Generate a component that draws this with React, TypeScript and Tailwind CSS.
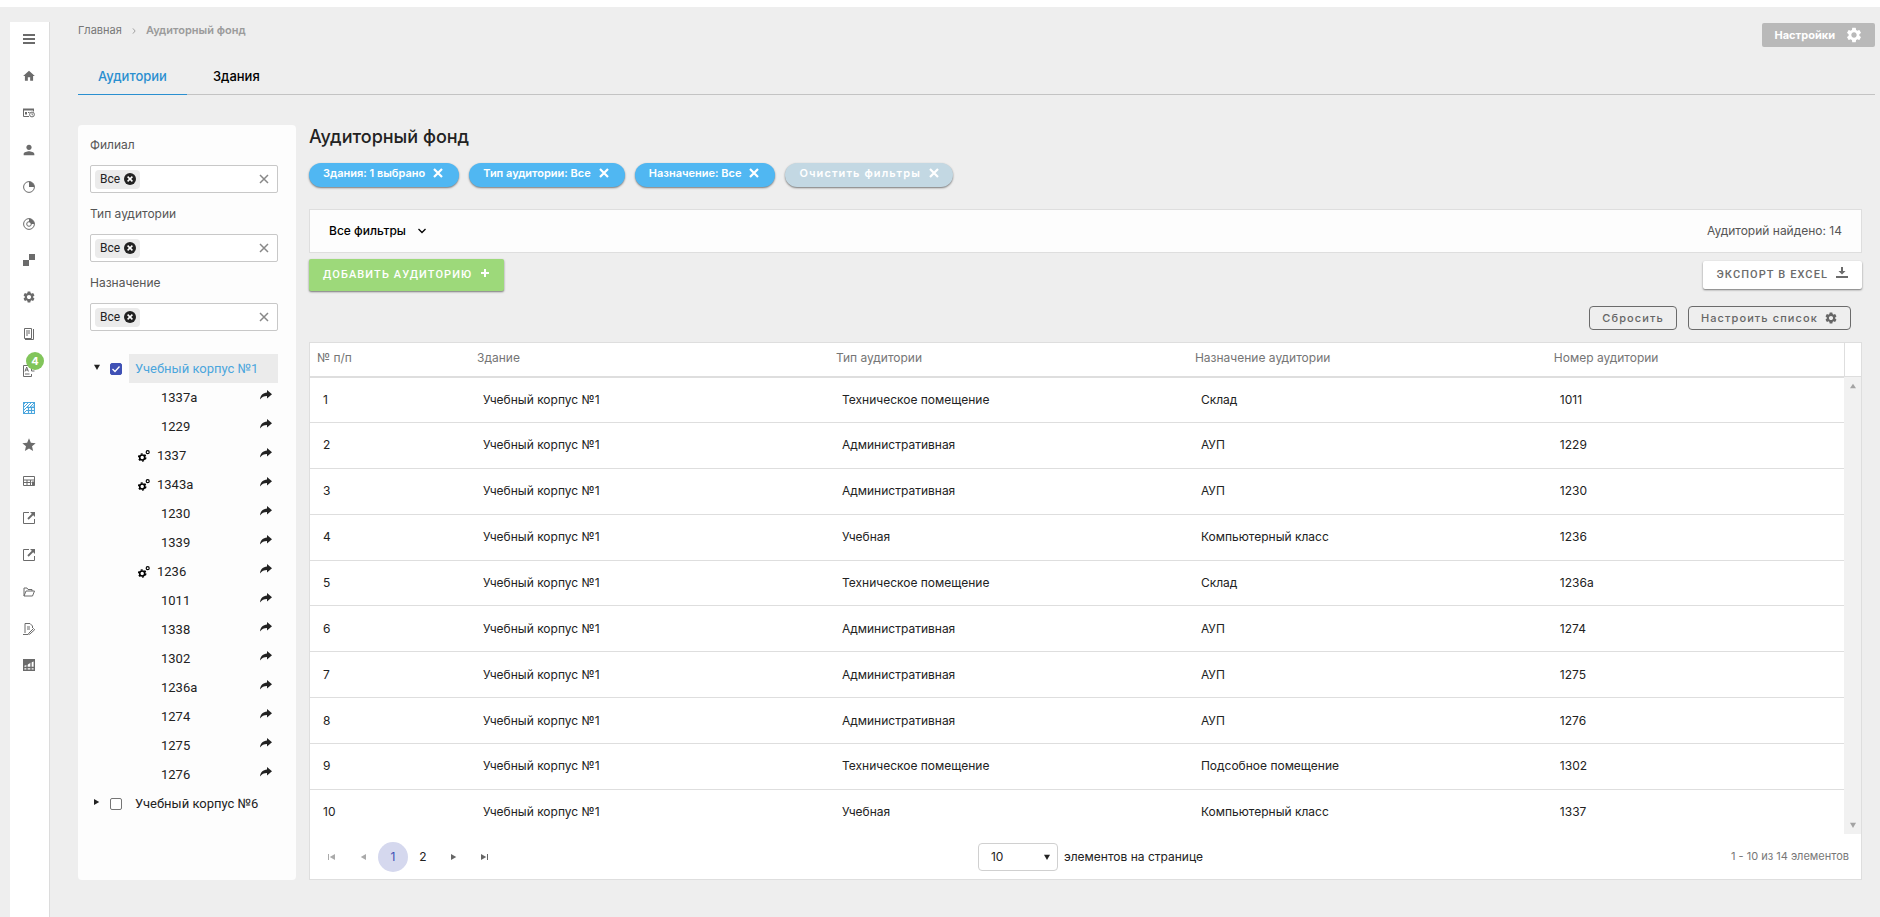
import { useState, type ReactNode } from 'react'
import { MdHome, MdPerson, MdSettings, MdStar } from 'react-icons/md'

interface NavItem {
  label: string
  icon: ReactNode
  active?: boolean
  badge?: number
}

function Glyph({ children }: { children: ReactNode }) {
  return (
    <svg viewBox="0 0 12 12" className="size-3" fill="none" stroke="currentColor" aria-hidden>
      {children}
    </svg>
  )
}

const externalIcon = (
  <Glyph>
    <path d="M6 .5H.5v11h11V7" />
    <path d="M5 7l5-5" strokeWidth="1.800" />
    <path d="M7 0h5v5z" fill="currentColor" stroke="none" />
  </Glyph>
)

const NAV: NavItem[] = [
  {
    label: 'Меню',
    icon: (
      <Glyph>
        <path d="M0 2h12M0 6h12M0 10h12" strokeWidth="2" />
      </Glyph>
    ),
  },
  { label: 'Главная', icon: <MdHome className="size-3.5" /> },
  {
    label: 'Расписание',
    icon: (
      <Glyph>
        <path d="M.5 2v7.500H6M10.500 2v2.500" />
        <path d="M0 2.500h11" strokeWidth="2" />
        <path d="M2 5h2v2.500H2zM5 5h1.500v1H5z" fill="currentColor" stroke="none" />
        <circle cx="9" cy="7.500" r="2.400" />
        <path d="M9 6v1.800h1.200" strokeWidth=".8" />
      </Glyph>
    ),
  },
  { label: 'Профиль', icon: <MdPerson className="size-4" /> },
  {
    label: 'Отчёты',
    icon: (
      <Glyph>
        <circle cx="6" cy="6" r="5.400" />
        <path d="M6 .6V6h5.400A5.400 5.400 0 0 0 6 .6z" fill="currentColor" stroke="none" />
      </Glyph>
    ),
  },
  {
    label: 'Аналитика',
    icon: (
      <Glyph>
        <circle cx="6" cy="6" r="5.400" />
        <path d="M6 .6V4a2 2 0 0 1 2 2h3.400A5.400 5.400 0 0 0 6 .6z" fill="currentColor" stroke="none" />
        <circle cx="6" cy="6" r="2.300" />
      </Glyph>
    ),
  },
  {
    label: 'Модули',
    icon: (
      <Glyph>
        <path d="M6 0h6v6H6zM0 6h6v6H0z" fill="currentColor" stroke="none" />
      </Glyph>
    ),
  },
  { label: 'Настройки', icon: <MdSettings className="size-3.5" /> },
  {
    label: 'Журнал',
    icon: (
      <Glyph>
        <path d="M1.500 .5h7v10h-7z" />
        <path d="M3 3h4M3 5h4M3 7h2" />
        <path d="M10.500 1v10.500H2" />
      </Glyph>
    ),
  },
  {
    label: 'Аттестация',
    badge: 4,
    icon: (
      <Glyph>
        <path d="M8 .5H.5v11h8V9" />
        <path d="M2 6.500L3.700 2l1.700 4.500M2.500 5h2.500M2 9h4.500" />
        <path d="M8.500 2.500v3.500h3" />
      </Glyph>
    ),
  },
  {
    label: 'Аудиторный фонд',
    active: true,
    icon: (
      <Glyph>
        <path d="M.5 .5h11v11H.5zM5.500 4.500V11M8.500 4.500V11M4 5.500h7M4 8.500h7" strokeWidth="1.200" />
        <path d="M0 3l3-3M0 6l6-6M0 9l9-9M0 12l4-4M7 5l5-5M9.500 5L12 2.500" />
      </Glyph>
    ),
  },
  { label: 'Избранное', icon: <MdStar className="size-4" /> },
  {
    label: 'Калькулятор',
    icon: (
      <Glyph>
        <path d="M.5 1.500h11v9H.5zM.5 5h11M.5 7.500h8M4 5v5.500M7.500 5v5.500" />
        <path d="M9 6.500h2.500v4H9z" fill="currentColor" stroke="none" />
      </Glyph>
    ),
  },
  { label: 'Внешний ресурс', icon: externalIcon },
  { label: 'Портал', icon: externalIcon },
  {
    label: 'Документы',
    icon: (
      <Glyph>
        <path d="M1 10V2h3l1 1.500h4V5M1 10l2-5h8.500L9.500 10z" />
      </Glyph>
    ),
  },
  {
    label: 'Заявки',
    icon: (
      <Glyph>
        <path d="M2 10V.5h5L9.500 3v2M4 4h3M4 6h3M0 11.500h5" />
        <path d="M5.500 10.500l5-5 1.200 1.200-5 4.500H5.500z" />
      </Glyph>
    ),
  },
  {
    label: 'Статистика',
    icon: (
      <Glyph>
        <path d="M.7 .7h10.600v10.600H.7z" strokeWidth="1.400" />
        <path d="M0 0h12v2L8 3.500 4 6 0 7z" fill="currentColor" stroke="none" />
        <path d="M4 5v6M8 3v8M1 8.500h10" strokeWidth="1.300" />
      </Glyph>
    ),
  },
]

const FILTERS = ['Филиал', 'Тип аудитории', 'Назначение']

const ROOMS: { name: string; service?: boolean }[] = [
  { name: '1337а' },
  { name: '1229' },
  { name: '1337', service: true },
  { name: '1343а', service: true },
  { name: '1230' },
  { name: '1339' },
  { name: '1236', service: true },
  { name: '1011' },
  { name: '1338' },
  { name: '1302' },
  { name: '1236а' },
  { name: '1274' },
  { name: '1275' },
  { name: '1276' },
]

const CHIPS = ['Здания: 1 выбрано', 'Тип аудитории: Все', 'Назначение: Все']

const COLUMNS = ['№ п/п', 'Здание', 'Тип аудитории', 'Назначение аудитории', 'Номер аудитории']

const ROWS = [
  ['Техническое помещение', 'Склад', '1011'],
  ['Административная', 'АУП', '1229'],
  ['Административная', 'АУП', '1230'],
  ['Учебная', 'Компьютерный класс', '1236'],
  ['Техническое помещение', 'Склад', '1236а'],
  ['Административная', 'АУП', '1274'],
  ['Административная', 'АУП', '1275'],
  ['Административная', 'АУП', '1276'],
  ['Техническое помещение', 'Подсобное помещение', '1302'],
  ['Учебная', 'Компьютерный класс', '1337'],
]

function Cross({ className = 'size-2.5', width = 2.2 }: { className?: string; width?: number }) {
  return (
    <svg viewBox="0 0 10 10" className={className} stroke="currentColor" strokeWidth={width} aria-hidden>
      <path d="M1 1l8 8M9 1l-8 8" />
    </svg>
  )
}

function Triangle({ dir }: { dir: 'up' | 'down' | 'left' | 'right' }) {
  const d = { up: 'M0 7l4-6 4 6z', down: 'M0 1l4 7 4-7z', left: 'M8 0L1 4l7 4z', right: 'M0 0l7 4-7 4z' }[dir]
  return (
    <svg viewBox="0 0 8 8" className="size-1.5" fill="currentColor" aria-hidden>
      <path d={d} />
    </svg>
  )
}

function Sidebar() {
  return (
    <nav className="ml-2.5 mt-[15px] w-10 shrink-0 border-r border-[#dcdcdc] bg-white">
      <ul className="-mt-px flex h-[663px] flex-col">
        {NAV.map((item) => (
          <li key={item.label} className="flex-1">
            <a
              href="#"
              aria-label={item.label}
              className={`relative flex h-full items-center justify-center pr-px ${
                item.active ? 'text-[#4ba6dd]' : 'text-[#6b6b6b]'
              }`}
            >
              {item.icon}
              {item.badge && (
                <span className="absolute left-4 top-0 flex size-[18px] items-center justify-center rounded-full bg-[#82c55b] text-[11px] font-bold text-white">
                  {item.badge}
                </span>
              )}
            </a>
          </li>
        ))}
      </ul>
    </nav>
  )
}

function FilterField({ label }: { label: string }) {
  return (
    <div role="group" aria-label={label} className="h-[69px]">
      <div className="mb-3 text-xs leading-4 text-[#555]">{label}</div>
      <div className="flex h-7 items-center justify-between rounded-xs border border-[#c8c8c8] bg-white pl-1 pr-2">
        <span className="flex h-[19px] items-center gap-1 rounded-sm bg-[#ebebeb] pl-[5px] pr-1 font-[Roboto] text-xs text-[#222]">
          Все
          <button
            type="button"
            aria-label="Удалить"
            className="flex size-3 items-center justify-center rounded-full bg-[#222] text-white"
          >
            <Cross className="size-1.5" width={2.5} />
          </button>
        </span>
        <button type="button" aria-label={`Очистить: ${label}`} className="text-[#888]">
          <Cross width={1.5} />
        </button>
      </div>
    </div>
  )
}

function BuildingNode({
  name,
  open,
  checked,
  onToggle,
  onCheck,
}: {
  name: string
  open: boolean
  checked: boolean
  onToggle: () => void
  onCheck: () => void
}) {
  return (
    <div className="flex h-[29px] items-center">
      <button
        type="button"
        aria-label={name}
        aria-expanded={open}
        onClick={onToggle}
        className="flex w-5 justify-center pb-1 pr-1.5"
      >
        <Triangle dir={open ? 'down' : 'right'} />
      </button>
      <label className={`flex h-full flex-1 items-center ${checked ? 'text-[#4ba6dd]' : ''}`}>
        <span className="relative mr-[7px] flex size-3">
          <input
            type="checkbox"
            checked={checked}
            onChange={onCheck}
            className="size-3 appearance-none rounded-xs border border-[#757575] bg-white checked:border-[#3f51b5] checked:bg-[#3f51b5]"
          />
          {checked && (
            <svg
              viewBox="0 0 12 12"
              className="pointer-events-none absolute inset-0"
              fill="none"
              stroke="white"
              strokeWidth="1.300"
            >
              <path d="M2.500 6l2.500 2.500 4.500-5" />
            </svg>
          )}
        </span>
        <span className={`flex h-full flex-1 items-center pl-1.5 ${checked ? 'bg-[#ebebeb]' : ''}`}>{name}</span>
      </label>
    </div>
  )
}

function Tree() {
  const [open, setOpen] = useState([true, false])
  const [checked, setChecked] = useState([true, false])
  const flip = (list: boolean[], i: number) => list.map((v, j) => (j === i ? !v : v))

  return (
    <div className="font-[Roboto] text-[13px] text-[#222]">
      <BuildingNode
        name="Учебный корпус №1"
        open={open[0]}
        checked={checked[0]}
        onToggle={() => setOpen(flip(open, 0))}
        onCheck={() => setChecked(flip(checked, 0))}
      />
      {open[0] && (
        <ul>
          {ROOMS.map((room) => (
            <li key={room.name} className="flex h-[29px] items-center pl-12 pr-1.5">
              {room.service ? (
                <svg
                  viewBox="0 0 12 12"
                  className="mr-[7px] size-3 text-black"
                  fill="none"
                  stroke="currentColor"
                  aria-hidden
                >
                  <circle cx="4.200" cy="7.500" r="2.500" strokeWidth="1.600" />
                  <circle cx="4.200" cy="7.500" r="3.600" strokeWidth="1.400" strokeDasharray="1.885" />
                  <circle cx="9.700" cy="2.200" r="1.500" strokeWidth="1.200" />
                </svg>
              ) : (
                <span className="w-[23px]" />
              )}
              <span className="flex-1">{room.name}</span>
              <a href="#" aria-label={`Перейти: ${room.name}`} className="pb-[5px]">
                <svg viewBox="0 0 12 10" className="h-2.5 w-3" fill="currentColor" aria-hidden>
                  <path d="M7 0l5 4.200L7 8.500V6C4 6 1.700 7 0 9.500.3 5.500 3 2.800 7 2.500z" />
                </svg>
              </a>
            </li>
          ))}
        </ul>
      )}
      <BuildingNode
        name="Учебный корпус №6"
        open={open[1]}
        checked={checked[1]}
        onToggle={() => setOpen(flip(open, 1))}
        onCheck={() => setChecked(flip(checked, 1))}
      />
    </div>
  )
}

function ColGroup() {
  return (
    <colgroup>
      <col className="w-40" />
      <col className="w-[23.4%]" />
      <col className="w-[23.4%]" />
      <col className="w-[23.4%]" />
      <col />
    </colgroup>
  )
}

function Pager() {
  const [page, setPage] = useState(1)
  const step = 'flex w-[31px] justify-center'
  return (
    <div className="grid h-[45px] grid-cols-3 items-center pl-1.5 pr-3">
      <div className="flex items-center text-xs">
        <button type="button" aria-label="Первая страница" className={`${step} text-[#aaa]`}>
          <span className="h-1.5 w-px bg-current" />
          <Triangle dir="left" />
        </button>
        <button type="button" aria-label="Предыдущая страница" className={`${step} text-[#aaa]`}>
          <Triangle dir="left" />
        </button>
        {[1, 2].map((n) => (
          <button
            key={n}
            type="button"
            onClick={() => setPage(n)}
            aria-current={n === page ? 'page' : undefined}
            className={`size-[30px] rounded-full ${n === page ? 'bg-[#d5d8ee] text-[#3f51b5]' : 'text-[#222]'}`}
          >
            {n}
          </button>
        ))}
        <button type="button" aria-label="Следующая страница" className={`${step} text-[#666]`}>
          <Triangle dir="right" />
        </button>
        <button type="button" aria-label="Последняя страница" className={`${step} text-[#666]`}>
          <Triangle dir="right" />
          <span className="h-1.5 w-px bg-current" />
        </button>
      </div>
      <label className="flex items-center justify-center gap-1.5 pl-4 text-xs text-[#222]">
        <span className="relative">
          <select
            defaultValue="10"
            className="h-7 w-20 appearance-none rounded-sm border border-[#d0d0d0] bg-white pl-3 text-xs"
          >
            <option>10</option>
            <option>20</option>
            <option>50</option>
          </select>
          <span className="pointer-events-none absolute right-2 top-[11px]">
            <Triangle dir="down" />
          </span>
        </span>
        элементов на странице
      </label>
      <div className="text-right text-[11px] text-[#777]">1 - 10 из 14 элементов</div>
    </div>
  )
}

function RoomsTable() {
  return (
    <div className="border border-[#dedede] bg-white">
      <div className="flex">
        <div className="flex-1">
          <table className="w-full table-fixed text-left text-xs">
            <ColGroup />
            <thead>
              <tr className="h-[34px] border-b-2 border-[#dedede] text-[#757575]">
                {COLUMNS.map((c) => (
                  <th key={c} className="px-[7px] pb-[3px] font-normal">
                    {c}
                  </th>
                ))}
              </tr>
            </thead>
          </table>
          <div className="h-[456px] overflow-hidden">
            <table className="h-[456px] w-full table-fixed text-left text-xs text-[#222]">
              <ColGroup />
              <tbody>
                {ROWS.map((row, i) => (
                  <tr key={row[2]} className="border-b border-[#dedede] last:border-b-0">
                    <td className="px-[13px]">{i + 1}</td>
                    <td className="px-[13px]">Учебный корпус №1</td>
                    {row.map((cell) => (
                      <td key={cell} className="px-[13px]">
                        {cell}
                      </td>
                    ))}
                  </tr>
                ))}
              </tbody>
            </table>
          </div>
        </div>
        <div className="flex w-[17px] flex-col text-[#a3a3a3]">
          <div className="h-[34px] border-b border-l border-[#dedede]" />
          <div className="flex flex-1 flex-col items-center justify-between bg-[#f1f1f1] py-1.5">
            <Triangle dir="up" />
            <Triangle dir="down" />
          </div>
        </div>
      </div>
      <Pager />
    </div>
  )
}

export default function App() {
  const [tab, setTab] = useState('Аудитории')

  return (
    <div className="flex min-h-screen border-t-[7px] border-white bg-[#eee] font-[Inter,sans-serif] text-[#222]">
      <Sidebar />
      <div className="min-w-0 flex-1 pl-7 pr-[5px]">
        <header className="flex items-start justify-between pt-4">
          <nav aria-label="Навигация" className="flex items-center gap-2.5 text-[11px] leading-[14px]">
            <a href="#" className="text-[#777]">
              Главная
            </a>
            <svg viewBox="0 0 4 8" className="mt-0.5 h-1.5 w-1" fill="none" stroke="#888">
              <path d="M.5 .5L3.500 4 .5 7.500" />
            </svg>
            <span className="font-semibold text-[#9b9b9b]">Аудиторный фонд</span>
          </nav>
          <button
            type="button"
            className="flex h-6 items-center gap-2.5 rounded-xs bg-[#b9b9b9] px-3 text-[11px] font-bold text-white"
          >
            Настройки
            <MdSettings className="size-[18px]" />
          </button>
        </header>

        <div role="tablist" className="mt-3.5 flex border-b border-[#c3c3c3] text-[13px] font-medium">
          {['Аудитории', 'Здания'].map((t) => (
            <button
              key={t}
              type="button"
              role="tab"
              aria-selected={t === tab}
              onClick={() => setTab(t)}
              className={`-mb-px h-[34px] border-b pb-0.5 ${
                t === tab ? 'border-[#2a8fd0] px-5 text-[#2a8fd0]' : 'border-transparent px-[26px] text-black'
              }`}
            >
              {t}
            </button>
          ))}
        </div>

        <div className="mt-[30px] flex gap-[13px] pr-[13px]">
          <aside className="w-[218px] shrink-0 rounded-sm bg-[#fdfdfd] pl-3 pr-[18px] pt-3">
            {FILTERS.map((f) => (
              <FilterField key={f} label={f} />
            ))}
            <div className="pt-2.5">
              <Tree />
            </div>
          </aside>

          <main className="min-w-0 flex-1">
            <h1 className="text-lg font-medium leading-6">Аудиторный фонд</h1>
            <div className="mt-3.5 flex gap-2.5">
              {CHIPS.map((c) => (
                <button
                  key={c}
                  type="button"
                  className="flex h-6 items-center gap-2 rounded-full bg-[#50b7f2] pb-1 pl-3.5 pr-4 text-[11px] font-semibold text-white shadow-[0_1px_2px_#777]"
                >
                  {c}
                  <Cross />
                </button>
              ))}
              <button
                type="button"
                className="flex h-6 items-center gap-2 rounded-full bg-[#c3d8e3] px-3.5 pb-1 text-[11px] font-semibold tracking-widest text-white shadow-[0_1px_2px_#777]"
              >
                Очистить фильтры
                <Cross />
              </button>
            </div>

            <div className="mt-[22px] flex h-11 items-center justify-between border border-[#dedede] bg-[#fdfdfd] px-[19px] text-xs">
              <button type="button" className="flex items-center gap-3 font-medium text-black">
                Все фильтры
                <svg viewBox="0 0 8 6" className="h-1.5 w-2" fill="none" stroke="currentColor" strokeWidth="1.300">
                  <path d="M.5 1L4 4.500 7.500 1" />
                </svg>
              </button>
              <span className="text-[#555]">Аудиторий найдено: 14</span>
            </div>

            <div className="mt-1.5 flex items-center justify-between font-[Roboto] text-[11px] font-medium tracking-widest">
              <button
                type="button"
                className="flex h-8 items-center gap-2 rounded-xs bg-[#9dd97a] px-3.5 text-white shadow-[0_1px_2px_#777]"
              >
                ДОБАВИТЬ АУДИТОРИЮ
                <svg viewBox="0 0 10 10" className="mb-1 size-2.5" stroke="currentColor" strokeWidth="2">
                  <path d="M5 1v8M1 5h8" />
                </svg>
              </button>
              <button
                type="button"
                className="flex h-7 items-center gap-2 rounded-xs bg-white px-3.5 text-[#6b6b6b] shadow-[0_1px_2px_#777]"
              >
                ЭКСПОРТ В EXCEL
                <svg viewBox="0 0 12 12" className="mb-1 size-3" fill="currentColor">
                  <path d="M5 0h2v4h2.500L6 7.500 2.500 4H5zM0 9h12v2H0z" />
                </svg>
              </button>
            </div>

            <div className="mt-[15px] flex justify-end gap-[11px] pr-[11px] text-[11px] font-medium tracking-widest text-[#666]">
              <button type="button" className="h-6 rounded-sm border border-[#6b6b6b] px-3">
                Сбросить
              </button>
              <button type="button" className="flex h-6 items-center gap-1.5 rounded-sm border border-[#6b6b6b] px-3">
                Настроить список
                <MdSettings className="size-3.5" />
              </button>
            </div>

            <div className="mt-3">
              <RoomsTable />
            </div>
          </main>
        </div>
      </div>
    </div>
  )
}
